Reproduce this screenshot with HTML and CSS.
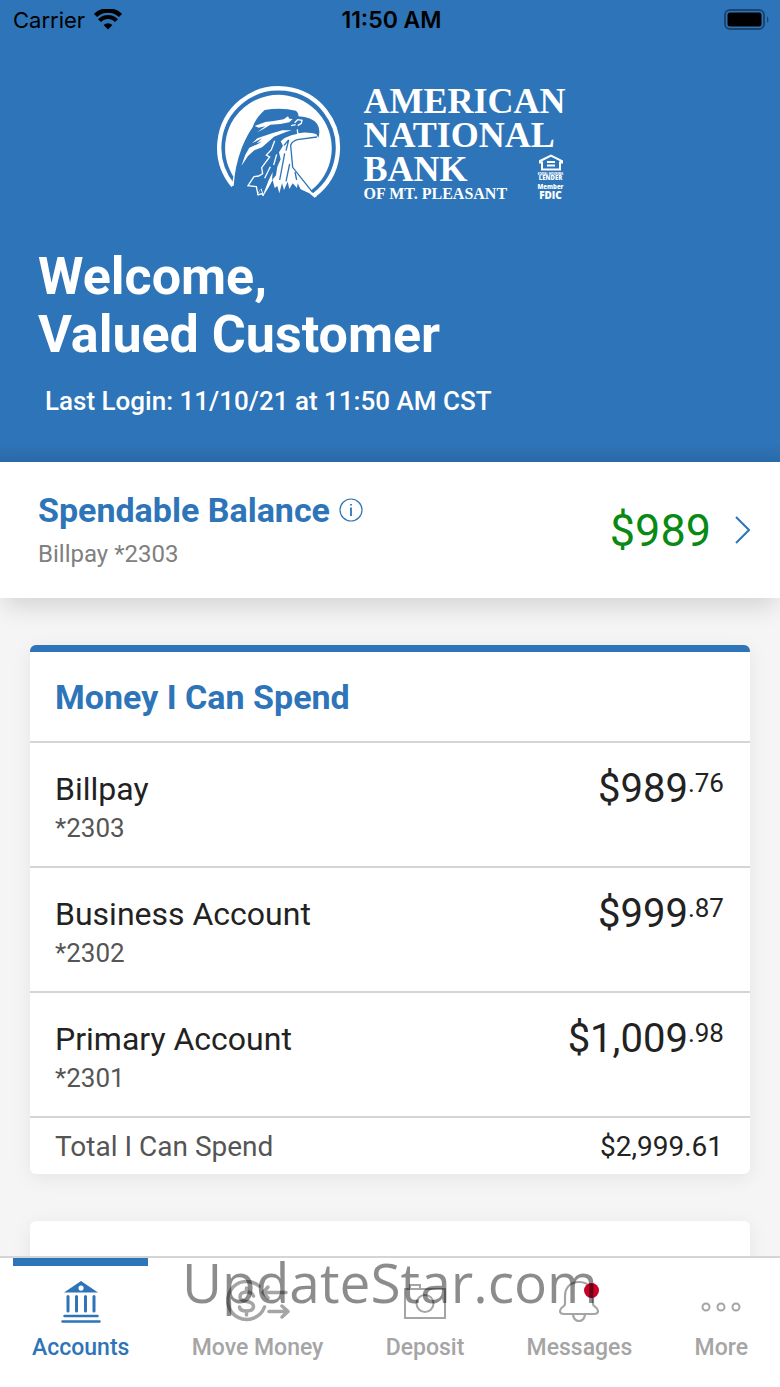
FILE: index.html
```html
<!DOCTYPE html>
<html lang="en">
<head>
    <meta charset="utf-8">
    <meta name="viewport" content="width=device-width, initial-scale=1">
    <title>Accounts</title>
    <link rel="stylesheet" href="styles.css">
</head>
<body>
<header class="hero">
    <div class="statusbar">
        <span class="carrier">Carrier
            <svg class="wifi" viewBox="0 0 28 22" width="28" height="22">
                <path d="M1.500 6.500 A18 18 0 0 1 26.500 6.500" fill="none" stroke="#000" stroke-width="4.500"/>
                <path d="M5.500 11.700 A11.500 11.500 0 0 1 22.500 11.700" fill="none" stroke="#000" stroke-width="4"/>
                <path d="M9.600 16 A6.500 6.500 0 0 1 18.400 16 L14 20.500 Z" fill="#000"/>
            </svg>
        </span>
        <span class="clock">11:50 AM</span>
        <span class="battery">
            <svg viewBox="0 0 46 22" width="46" height="22">
                <rect x="1" y="1" width="39" height="19" rx="5" fill="none" stroke="#1b4570" stroke-width="2"/>
                <rect x="3.500" y="3.500" width="34" height="14" rx="2.500" fill="#000"/>
                <path d="M43 7 Q46 10.500 43 14 Z" fill="#1b4570"/>
            </svg>
        </span>
    </div>

    <div class="logo">
        <svg class="eagle" viewBox="45 45 375 345" width="125" height="115">
            <path d="M93 347 A178 178 0 1 1 337 375" fill="none" stroke="#fff" stroke-width="13"/>
            <path d="M89 348 L94 320 A160 160 0 1 1 326 362 L345 378 L338 383 L322 370 L296 358 L287 340 L285 354 L272 340 L262 357 L257 335 L246 360 L240 340 L232 370 L226 348 L218 354 L212 330 L200 352 L184 378 L176 358 L166 374 L162 352 L136 350 L150 325 L120 300 L95 347 Z" fill="#fff"/>
            <!-- head, beak and neck -->
            <path d="M95 349 Q98 290 120 232 Q137 192 152 172 Q160 145 188 120 Q238 112 282 122 Q291 130 289 139 Q330 142 345 161 Q357 178 349 203 L343 193 Q330 187 300 188 L268 196 L248 204 L236 214 L243 227 L231 247 L236 268 L226 290 L222 316 L210 331 L212 306 L200 331 L184 372 L177 352 L167 362 L160 348 L142 346 L156 328 L164 331 L172 352 L186 345 L150 390 L90 390 Z" fill="#2e74b8"/>
            <path d="M345 201 L286 209 Q270 214 266 226 L272 292 L332 367" fill="none" stroke="#2e74b8" stroke-width="4"/>
            <path d="M248 250 L233 330 M263 282 L252 334 M246 226 L260 210 L252 242 M279 306 L284 330" fill="none" stroke="#2e74b8" stroke-width="4"/>
            <path d="M118 288 L130 254 L142 233 L168 222 L220 190 L250 187 L216 200 L180 232 L157 241 L138 258 Z M164 220 L180 205 L150 220 L166 205 L210 190 L241 181 L269 181 L232 192 L200 208 Z" fill="#fff"/>
            <path d="M158 168 L190 156 L215 153 L245 148 L258 139 L262 146 L272 147 L262 157 L235 162 L205 164 L183 178 L165 187 L190 169 L170 173 Z" fill="#fff"/>
            <path d="M278 158 L287 149 L300 151 L298 160 L287 167 M267 167 L281 164 M286 178 L287 190 L300 195" fill="none" stroke="#fff" stroke-width="4"/>
            <path d="M218 212 L208 239 L193 255 L203 261 L179 293 L182 311 L170 318 L156 320 L138 347 L163 350 L168 375 L180 371 L184 378 M205 290 L188 325 M224 253 L215 285" fill="none" stroke="#fff" stroke-width="4"/>
        </svg>
        <div class="brand">
            <span>AMERICAN</span>
            <span>NATIONAL</span>
            <span>BANK</span>
            <span class="brand-sub">OF MT. PLEASANT</span>
        </div>
        <div class="badges">
            <svg viewBox="0 0 26 17" width="26" height="17">
                <path d="M2 7 L13 1.500 L24 7 V8.500 H22 V15.500 H4 V8.500 H2 Z" fill="none" stroke="#fff" stroke-width="2"/>
                <path d="M9 8 H17 M9 11.500 H17" stroke="#fff" stroke-width="2"/>
            </svg>
            <span class="tiny">EQUAL HOUSING</span>
            <span class="lender">LENDER</span>
            <span class="member">Member</span>
            <span class="fdic">FDIC</span>
        </div>
    </div>

    <h1>Welcome,<br>Valued Customer</h1>
    <p class="last-login">Last Login: 11/10/21 at 11:50 AM CST</p>
</header>

<a class="balance" href="#">
    <div class="balance-info">
        <h2>Spendable Balance
            <svg viewBox="0 0 24 24" width="24" height="24" fill="none" stroke="#2e74b8" stroke-width="1.200">
                <circle cx="12" cy="12" r="11"/>
                <path d="M12 9.500 V18 M12 6 V7.500" stroke-width="1.800"/>
            </svg>
        </h2>
        <p>Billpay *2303</p>
    </div>
    <span class="balance-amount">$989</span>
    <svg viewBox="0 0 15 28" width="15" height="28" fill="none" stroke="#2e74b8" stroke-width="2">
        <path d="M1 1 L14 14 L1 27"/>
    </svg>
</a>

<main class="content">
    <section class="card card-top">
        <h2>Money I Can Spend</h2>
        <a class="account" href="#">
            <span class="name">Billpay <small>*2303</small></span>
            <span class="amount">$989<sup>.76</sup></span>
        </a>
        <a class="account" href="#">
            <span class="name">Business Account <small>*2302</small></span>
            <span class="amount">$999<sup>.87</sup></span>
        </a>
        <a class="account" href="#">
            <span class="name">Primary Account <small>*2301</small></span>
            <span class="amount">$1,009<sup>.98</sup></span>
        </a>
        <div class="total">
            <span>Total I Can Spend</span>
            <span class="total-amount">$2,999.61</span>
        </div>
    </section>
    <section class="card card-next"></section>
</main>

<nav class="tabs">
    <a class="tab active" href="#">
        <svg viewBox="0 0 40 44" width="40" height="44" fill="none" stroke="currentColor" stroke-width="2.500" stroke-linecap="round">
            <path d="M20 1 L37 12.500 H3 Z M20 5.500 a2.600 2.600 0 1 0 0.100 0 Z" fill="currentColor" fill-rule="evenodd" stroke="none"/>
            <path d="M7 16.500 V31 M15.500 16.500 V31 M24.500 16.500 V31 M33 16.500 V31" stroke-width="3"/>
            <path d="M3.500 36 H36.500 M1.500 41.500 H38.500"/>
        </svg>
        Accounts
    </a>
    <a class="tab" href="#">
        <svg viewBox="0 0 64 44" width="64" height="44" fill="none" stroke="currentColor" stroke-width="3.500" stroke-linecap="round" stroke-linejoin="round">
            <path d="M33 6 A19 19 0 1 0 38.500 27"/>
            <path d="M27.500 16 Q26 12 20.500 12 Q14 12 14 17 Q14 20.500 20.500 21.500 Q27.500 22.500 27.500 26.500 Q27.500 31 20.500 31 Q14 31 13.500 27 M20.500 8 V12 M20.500 31 V35"/>
            <path d="M60 12.500 H38 M42 7 L37 12.500 L42 18 M43 31.500 H62 M56 26 L62 31.500 L56 37"/>
        </svg>
        Move Money
    </a>
    <a class="tab" href="#">
        <svg viewBox="0 0 42 44" width="42" height="44" fill="none" stroke="currentColor" stroke-width="2">
            <path d="M1 9 H41 V38 H1 Z M6 8 V5 H16 V8"/>
            <circle cx="21" cy="23.500" r="8.500"/>
        </svg>
        Deposit
    </a>
    <a class="tab" href="#">
        <span class="bell">
            <svg viewBox="0 0 42 44" width="42" height="44" fill="none" stroke="currentColor" stroke-width="2.200">
                <path d="M21 2 C12 2 7 8 7 16 V24 C7 27 2 27 2 31 Q2 34 6 34 H36 Q40 34 40 31 C40 27 35 27 35 24 V16 C35 8 30 2 21 2 Z M15 34.500 Q16 41 21 41 Q26 41 27 34.500"/>
            </svg>
            <span class="dot"></span>
        </span>
        Messages
    </a>
    <a class="tab" href="#">
        <svg viewBox="0 0 40 44" width="40" height="44" fill="none" stroke="currentColor" stroke-width="2">
            <circle cx="5" cy="27" r="3.500"/><circle cx="20" cy="27" r="3.500"/><circle cx="35" cy="27" r="3.500"/>
        </svg>
        More
    </a>
    <span class="watermark">UpdateStar.com</span>
</nav>
</body>
</html>
```

FILE: styles.css
```css
* {box-sizing: border-box;}

body {
    margin: 0;
    height: 100vh;
    display: flex;
    flex-direction: column;
    font-family: Roboto, "Liberation Sans", sans-serif;
    background-color: #f5f5f5;
    color: #222;
}

h1, h2, p {margin: 0;}
a {color: inherit; text-decoration: none;}
svg {display: block; flex: none;}

/* Header */
.hero {
    flex: none;
    background: linear-gradient(#2e74b8 96%, #2b6aa9);
    color: white;
    padding-bottom: 46px;
}

.statusbar {
    display: grid;
    grid-template-columns: 1fr auto 1fr;
    align-items: center;
    height: 40px;
    padding: 0 10px 0 13px;
    font-family: Inter, sans-serif;
    font-size: 22px;
    color: black;
}

.carrier {display: flex; align-items: center; gap: 9px;}
.clock {font-size: 23px; font-weight: 600;}
.battery {justify-self: end;}

.logo {
    display: flex;
    justify-content: center;
    height: 116px;
    margin-top: 44px;
}

.eagle {margin-top: 1px;}

.brand {
    margin-left: 22px;
    font: bold 36px "Liberation Serif", serif;
    line-height: 34px;
}

.brand span {display: block;}
.brand .brand-sub {font-size: 16px; line-height: 16px;}

.badges {
    display: flex;
    flex-direction: column;
    align-items: center;
    justify-content: flex-end;
    width: 26px;
    margin-left: -28px;
    font-family: "Open Sans", sans-serif;
    font-weight: 800;
    text-align: center;
    white-space: nowrap;
}

.badges .tiny {font-size: 3px; line-height: 4px; margin-top: 1px;}
.badges .lender {font-size: 6px; line-height: 5px;}
.badges .member {font-size: 6px; line-height: 6px; margin-top: 3px;}
.badges .fdic {font-size: 10px; line-height: 10px;}

h1 {
    padding-left: 38px;
    margin-top: 48px;
    font-size: 52px;
    line-height: 58px;
}

.last-login {
    padding-left: 45px;
    margin-top: 22px;
    font-size: 26px;
    line-height: 30px;
    font-weight: 500;
}

/* Balance */
.balance {
    flex: none;
    position: relative;
    display: flex;
    align-items: center;
    height: 136px;
    padding: 0 30px 0 38px;
    background-color: white;
    box-shadow: 0 12px 24px -4px rgba(0, 0, 0, 0.14);
}

.balance-info {flex: 1;}

h2 {
    font-size: 34px;
    line-height: 40px;
    color: #2e74b8;
}

.balance h2 {display: flex; align-items: center; gap: 9px;}
.balance p {margin-top: 8px; font-size: 24px; line-height: 32px; color: #808080;}
.balance-amount {margin-right: 24px; font-size: 45px; color: #0a8a15;}

/* Cards */
.content {
    flex: 1;
    min-height: 0;
    overflow: hidden;
    padding: 47px 30px 0;
}

.card {
    background-color: white;
    border-radius: 6px;
    box-shadow: 0 4px 20px rgba(0, 0, 0, 0.07);
}

.card-top {border-top: 7px solid #2e74b8;}
.card h2 {padding: 25px 25px 24px;}

.account {
    display: flex;
    justify-content: space-between;
    height: 125px;
    padding: 26px 26px 0 25px;
    border-top: 2px solid #d5d5d5;
}

.name {font-size: 32px; line-height: 40px;}
.name small {display: block; font-size: 26px; line-height: 38px; color: #555;}
.amount {font-size: 40px; line-height: 40px;}
.amount sup {font-size: 26px; line-height: 20px; vertical-align: 10px;}

.total {
    display: flex;
    justify-content: space-between;
    align-items: center;
    height: 58px;
    padding: 0 27px 0 25px;
    border-top: 2px solid #d5d5d5;
    font-size: 28px;
    color: #555;
}

.total-amount {color: #222;}
.card-next {height: 200px; margin-top: 47px;}

/* Bottom tabs */
.tabs {
    flex: none;
    position: relative;
    display: flex;
    justify-content: space-between;
    height: 131px;
    padding: 0 13px;
    background-color: white;
    border-top: 2px solid #d5d5d5;
}

.tab {
    display: flex;
    flex-direction: column;
    align-items: center;
    gap: 9px;
    padding: 14px 19px 0;
    border-top: 8px solid transparent;
    font-size: 23px;
    line-height: 30px;
    font-weight: 500;
    color: #a5a5a5;
}

.active {color: #2e74b8; border-top-color: #2e74b8;}
.bell {position: relative;}

.dot {
    position: absolute;
    top: 3px;
    right: 1px;
    width: 15px;
    height: 15px;
    border-radius: 50%;
    background-color: #c80028;
}

.watermark {
    position: absolute;
    top: -14px;
    left: 50%;
    transform: translateX(-50%);
    font: 400 55px "Open Sans", "Noto Sans", sans-serif;
    color: rgba(0, 0, 0, 0.45);
    pointer-events: none;
}
```
